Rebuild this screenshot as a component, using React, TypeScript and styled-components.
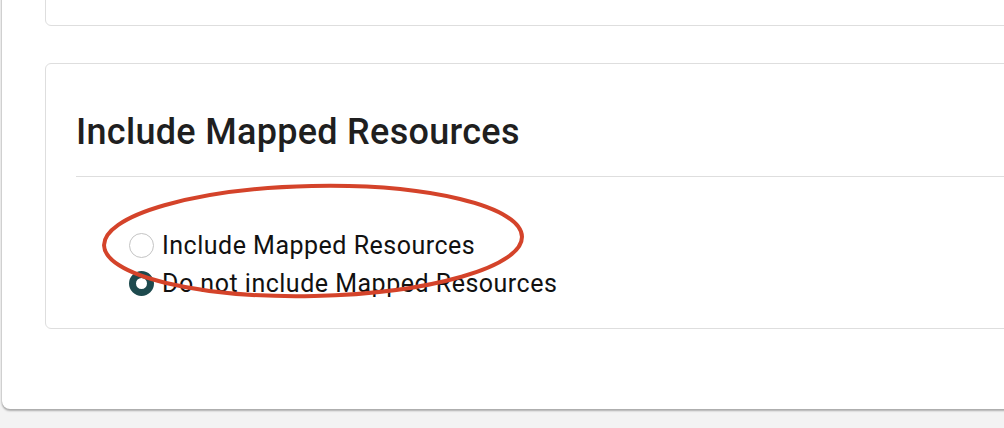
import React, { FC, useState } from 'react';
import styled, { createGlobalStyle } from 'styled-components';

const GlobalStyle = createGlobalStyle`
  html, body {
    margin: 0;
    padding: 0;
    background: #f3f3f3;
    overflow: hidden;
  }
  body {
    font-family: Roboto, 'Liberation Sans', sans-serif;
    color: #1f1f1f;
  }
`;

const Page = styled.div`
  width: 1004px;
  height: 428px;
  overflow: hidden;
`;

const OuterCard = styled.div`
  margin: -60px 0 0 2px;
  width: 1040px;
  padding: 0 0 80px 43px;
  background: #fff;
  border-radius: 8px;
  box-shadow: 0 2px 2px rgba(0, 0, 0, 0.28), -1px 0 2px rgba(0, 0, 0, 0.1);
  display: flex;
  flex-direction: column;
  gap: 37px;
`;

const Panel = styled.section`
  position: relative;
  border: 1px solid #dedede;
  border-radius: 6px;
  background: #fff;
`;

const TopPanel = styled(Panel)`
  height: 84px;
`;

const SettingsPanel = styled(Panel)`
  padding: 46px 0 26px 30px;
`;

const Heading = styled.h2`
  margin: 0;
  font-size: 36px;
  line-height: 44px;
  font-weight: 500;
  letter-spacing: 0.3px;
  color: #1f1f1f;
`;

const Divider = styled.hr`
  margin: 22px 0 0;
  border: 0;
  border-top: 1px solid #dedede;
`;

const OptionList = styled.div`
  margin-top: 50px;
  padding-left: 53px;
  display: flex;
  flex-direction: column;
`;

const Option = styled.label`
  display: flex;
  align-items: center;
  gap: 8px;
  height: 37.5px;
  font-size: 25px;
  letter-spacing: 0.5px;
  color: #111;
  cursor: pointer;
`;

const RadioDot = styled.span<{ checked: boolean }>`
  box-sizing: border-box;
  width: 25px;
  height: 25px;
  border-radius: 50%;
  flex-shrink: 0;
  background: #fff;
  border: ${({ checked }) =>
    checked ? '7px solid #1d4a4e' : '1px solid #c4c4c4'};
`;

const Annotation = styled.svg`
  position: absolute;
  left: 50px;
  top: 116px;
  pointer-events: none;
`;

const options = [
  { value: 'include', label: 'Include Mapped Resources' },
  { value: 'exclude', label: 'Do not include Mapped Resources' },
];

const App: FC = () => {
  const [selected, setSelected] = useState('exclude');

  return (
    <Page>
      <GlobalStyle />
      <OuterCard>
        <TopPanel />
        <SettingsPanel>
          <Heading>Include Mapped Resources</Heading>
          <Divider />
          <OptionList>
            {options.map((o) => (
              <Option key={o.value} onClick={() => setSelected(o.value)}>
                <RadioDot checked={selected === o.value} />
                {o.label}
              </Option>
            ))}
          </OptionList>
          <Annotation width='440' height='130' viewBox='0 0 440 130'>
            <ellipse
              cx='217'
              cy='61'
              rx='209'
              ry='55'
              transform='rotate(-1.2 217 61)'
              fill='none'
              stroke='#d4432a'
              strokeWidth='4'
            />
          </Annotation>
        </SettingsPanel>
      </OuterCard>
    </Page>
  );
};

export default App;
